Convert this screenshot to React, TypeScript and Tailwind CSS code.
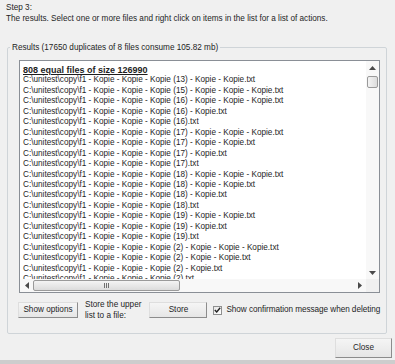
import React from 'react';

const base = 'C:\\unitest\\copy\\f1 - Kopie - Kopie - Kopie ';

const rows = [
  '(13) - Kopie - Kopie.txt',
  '(15) - Kopie - Kopie - Kopie.txt',
  '(16) - Kopie - Kopie - Kopie.txt',
  '(16) - Kopie.txt',
  '(16).txt',
  '(17) - Kopie - Kopie - Kopie.txt',
  '(17) - Kopie - Kopie.txt',
  '(17) - Kopie.txt',
  '(17).txt',
  '(18) - Kopie - Kopie - Kopie.txt',
  '(18) - Kopie - Kopie.txt',
  '(18) - Kopie.txt',
  '(18).txt',
  '(19) - Kopie - Kopie.txt',
  '(19) - Kopie.txt',
  '(19).txt',
  '(2) - Kopie - Kopie - Kopie.txt',
  '(2) - Kopie - Kopie.txt',
  '(2) - Kopie.txt',
  '(2).txt',
];

function Arrow({ dir }: { dir: 'up' | 'down' | 'left' | 'right' }) {
  const pts = {
    up: '0,4 3.5,0 7,4',
    down: '0,0 3.5,4 7,0',
    left: '4,0 0,3.5 4,7',
    right: '0,0 4,3.5 0,7',
  }[dir];
  const vertical = dir === 'up' || dir === 'down';
  return (
    <svg width={vertical ? 7 : 4} height={vertical ? 4 : 7} viewBox={vertical ? '0 0 7 4' : '0 0 4 7'}>
      <polygon points={pts} fill="#4a4a4a" />
    </svg>
  );
}

function WinButton({ children, className }: { children: React.ReactNode; className: string }) {
  return (
    <button
      className={
        'shrink-0 whitespace-nowrap flex items-center justify-center bg-gradient-to-b from-[#f5f5f5] to-[#e6e6e6] border border-t-[#dedede] border-l-[#dedede] border-r-[#8c8c8c] border-b-[#8c8c8c] ' +
        className
      }
    >
      {children}
    </button>
  );
}

export default function App() {
  return (
    <div className="w-[395px] h-[364px] bg-[#f0f0f0] flex flex-col overflow-hidden text-[8.2px] text-[#1e1e1e] font-['Liberation_Sans',Arial,sans-serif]">
      <div className="px-[6px] pt-[2px] leading-[11px]">
        <div>Step 3:</div>
        <div>The results. Select one or more files and right click on items in the list for a list of actions.</div>
      </div>

      <fieldset className="mt-[18px] ml-[7px] w-[379px] border border-[#cfd4d8] rounded-[2px]">
        <legend className="ml-[2px] px-[2px] leading-[11px]">
          Results (17650 duplicates of 8 files consume 105.82 mb)
        </legend>
        <div className="pl-[11px] pr-[6px] pb-[12px]">
          <div className="mt-[7px] h-[233px] border border-[#8a8f96] bg-white flex flex-col">
            <div className="flex h-[218px]">
              <div className="flex-1 overflow-hidden pt-[4px] pl-[3px] leading-[10.45px] whitespace-nowrap">
                <div className="font-bold underline text-[9px]">808 equal files of size 126990</div>
                {rows.map((r, i) => (
                  <div key={i}>{base + r}</div>
                ))}
              </div>
              <div className="w-[13px] bg-[#f8f8f8] flex flex-col items-center">
                <div className="h-[13px] flex items-center justify-center">
                  <Arrow dir="up" />
                </div>
                <div className="mt-[2px] w-[11px] h-[12px] rounded-[2px] border border-[#9a9a9a] bg-gradient-to-r from-[#f4f4f4] to-[#dcdcdc]" />
                <div className="mt-auto h-[13px] flex items-center justify-center">
                  <Arrow dir="down" />
                </div>
              </div>
            </div>
            <div className="flex h-[13px]">
              <div className="flex-1 flex bg-[#f8f8f8]">
                <div className="w-[13px] flex items-center justify-center">
                  <Arrow dir="left" />
                </div>
                <div className="w-[147px] my-[1px] rounded-[2px] border border-[#9a9a9a] bg-gradient-to-b from-[#f4f4f4] to-[#dcdcdc] flex items-center justify-center">
                  <div className="flex gap-[1px]">
                    <div className="w-[1px] h-[5px] bg-[#6f6f6f]" />
                    <div className="w-[1px] h-[5px] bg-[#6f6f6f]" />
                    <div className="w-[1px] h-[5px] bg-[#6f6f6f]" />
                  </div>
                </div>
                <div className="ml-auto w-[13px] flex items-center justify-center">
                  <Arrow dir="right" />
                </div>
              </div>
              <div className="w-[13px] bg-[#f0f0f0]" />
            </div>
          </div>

          <div className="mt-[6px] flex items-center whitespace-nowrap">
            <WinButton className="w-[60px] h-[16px] ml-[-1px]">Show options</WinButton>
            <div className="shrink-0 ml-[7px] leading-[11px]">
              <div>Store the upper</div>
              <div>list to a file:</div>
            </div>
            <WinButton className="ml-[8px] w-[58px] h-[16px]">Store</WinButton>
            <div className="shrink-0 ml-[6px] w-[9px] h-[9px] border border-[#8e8f8f] bg-gradient-to-br from-[#e6e6e6] to-white flex items-center justify-center">
              <svg width="7" height="6" viewBox="0 0 7 6">
                <path d="M0.8 3 L2.7 5 L6.2 0.8" fill="none" stroke="#222" strokeWidth="1.4" />
              </svg>
            </div>
            <span className="shrink-0 ml-[4px] tracking-[-0.05px]">Show confirmation message when deleting</span>
          </div>
        </div>
      </fieldset>

      <div className="flex justify-end pr-[3px] mt-[4px]">
        <WinButton className="w-[57px] h-[20px]">Close</WinButton>
      </div>
      <div className="mt-auto h-[4px] bg-[#cdcdcd]" />
    </div>
  );
}
